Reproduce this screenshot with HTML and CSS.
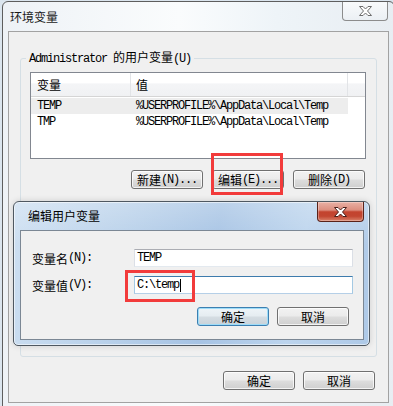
FILE: index.html
```html
<!DOCTYPE html>
<html>
<head>
<meta charset="utf-8">
<title>环境变量</title>
<link rel="stylesheet" href="styles.css">
</head>
<body>
<div class="win">
  <div class="titlebar">
    <span class="title">环境变量</span>
    <span class="close inactive"><svg width="13" height="10" viewBox="0 0 13 10"><polygon points="0.5,0.5 4,0.5 6.5,3 9,0.5 12.5,0.5 8.5,5 12.5,9.5 9,9.5 6.5,7 4,9.5 0.5,9.5 4.5,5" fill="#fff" stroke="#6d6d6d" stroke-width="1" stroke-linejoin="round"/></svg></span>
  </div>
  <div class="client">
    <fieldset class="group">
      <legend><span class="m">Administrator </span>的用户变量<span class="m">(U)</span></legend>
      <div class="list">
        <div class="lhead"><div class="c1">变量</div><div class="c2">值</div><div class="c3"></div></div>
        <div class="lrow sel m"><div class="c1">TEMP</div><div class="c2">%USERPROFILE%\AppData\Local\Temp</div></div>
        <div class="lrow m"><div class="c1">TMP</div><div class="c2">%USERPROFILE%\AppData\Local\Temp</div></div>
      </div>
      <div class="btns">
        <button class="btn">新建<span class="m">(N)...</span></button>
        <button class="btn">编辑<span class="m">(E)...</span></button>
        <button class="btn">删除<span class="m">(D)</span></button>
      </div>
    </fieldset>
    <div class="btns bottom">
      <button class="btn">确定</button>
      <button class="btn">取消</button>
    </div>
  </div>
</div>

<div class="dlg">
  <div class="dtitlebar">
    <span class="dtitle">编辑用户变量</span>
    <span class="close active"><svg width="13" height="10" viewBox="0 0 13 10"><polygon points="0.5,0.5 4,0.5 6.5,3 9,0.5 12.5,0.5 8.5,5 12.5,9.5 9,9.5 6.5,7 4,9.5 0.5,9.5 4.5,5" fill="#fff" stroke="#4a1e18" stroke-width="1" stroke-linejoin="round"/></svg></span>
  </div>
  <div class="dclient">
    <div class="form">
      <div class="lbl">变量名<span class="m">(N):</span></div>
      <div class="field m">TEMP</div>
      <div class="lbl">变量值<span class="m">(V):</span></div>
      <div class="field focus m">C:\temp<span class="caret"></span></div>
    </div>
    <div class="btns dbtns">
      <button class="btn default">确定</button>
      <button class="btn">取消</button>
    </div>
  </div>
</div>

<div class="mark mark1"></div>
<div class="mark mark2"></div>
</body>
</html>
```

FILE: styles.css
```css
* { box-sizing: border-box; }
html, body { margin: 0; padding: 0; }
body {
  width: 393px;
  height: 406px;
  overflow: hidden;
  position: relative;
  background: #dbe5ee;
  font-family: "Noto Sans CJK SC", "Liberation Sans", sans-serif;
  font-size: 12px;
  color: #000;
}
.m {
  font-family: "Liberation Mono", "Noto Sans CJK SC", monospace;
  font-size: 12px;
  letter-spacing: -1.2px;
}

/* outer window */
.win {
  margin: 1px 0 0 2px;
  width: 393px;
  border: 1px solid #5e5e5e;
  border-radius: 6px 6px 0 0;
  background: linear-gradient(90deg, #eef2f6 0%, #fafcfd 45%, #eef4f8 70%, #e8edf2 100%);
  padding: 0 5px 5px;
}
.titlebar {
  height: 29px;
  display: flex;
  align-items: flex-start;
}
.title {
  padding-left: 2px;
  line-height: 29px;
  color: #1a1a1a;
}
.close {
  margin-left: auto;
  display: flex;
  align-items: center;
  justify-content: center;
  border-radius: 0 0 4px 4px;
}
.close.inactive {
  width: 46px;
  height: 19px;
  margin-right: 1px;
  border: 1px solid #8c8c8c;
  border-top: 0;
  background: linear-gradient(rgba(255,255,255,0.7), rgba(236,240,244,0.7));
}
.client {
  border: 1px solid #a2a2a2;
  background: #f0f0f0;
  padding: 0 0 12px;
}
.group {
  margin: 18px 11px 0;
  padding: 0 0 167px;
  border: 1px solid #d5dfe5;
  border-radius: 3px;
  min-width: 0;
}
.group legend {
  margin-left: 5px;
  padding: 0 3px;
  line-height: 14px;
}
.list {
  margin: 6px 0 0 9px;
  width: 336px;
  height: 87px;
  border: 1px solid #828790;
  background: #fff;
}
.lhead {
  display: flex;
  height: 24px;
  border-bottom: 1px solid #d5d5d5;
  background: linear-gradient(#ffffff 0%, #ffffff 45%, #f4f5f7 46%, #f0f1f3 100%);
  line-height: 23px;
}
.lhead .c1 { width: 100px; padding-left: 6px; border-right: 1px solid #e2e4e7; }
.lhead .c2 { width: 217px; padding-left: 5px; border-right: 1px solid #e2e4e7; }
.lhead .c3 { flex: 1; }
.lrow {
  display: flex;
  width: 317px;
  height: 16px;
  line-height: 16px;
  white-space: nowrap;
}
.lrow.sel { margin-top: 1px; background: #ededed; }
.lrow .c1 { width: 100px; padding-left: 6px; }
.lrow .c2 { width: 217px; padding-left: 5px; }

.btns {
  display: flex;
  justify-content: flex-end;
  gap: 9px;
  margin: 11px 11px 0 0;
}
.btns.bottom {
  gap: 8px;
  margin: 14px 13px 0 0;
}
.btn {
  width: 72px;
  height: 19px;
  padding: 0;
  margin: 0;
  font: inherit;
  color: #000;
  display: flex;
  align-items: center;
  justify-content: center;
  border: 1px solid #707070;
  border-radius: 3px;
  background: linear-gradient(#f2f2f2 0%, #ebebeb 48%, #dddddd 52%, #cfcfcf 100%);
  box-shadow: inset 0 0 0 1px rgba(255,255,255,0.75);
  white-space: nowrap;
}

/* edit dialog */
.dlg {
  position: absolute;
  left: 13px;
  top: 201px;
  width: 357px;
  height: 145px;
  border: 1px solid #4f5861;
  border-radius: 6px 6px 5px 5px;
  padding: 0 5px 5px 6px;
  background:
    linear-gradient(rgba(255,255,255,0.25), rgba(255,255,255,0) 30%),
    linear-gradient(100deg, #cddff1 0%, #b9d1ea 30%, #a6c3e4 55%, #bcd4ed 78%, #aec9e7 100%);
  box-shadow: inset 0 0 0 1px rgba(255,255,255,0.55), 0 0 6px rgba(0,0,0,0.15);
}
.dtitlebar {
  height: 28px;
  display: flex;
  align-items: flex-start;
}
.dtitle {
  padding-left: 8px;
  line-height: 27px;
  color: #000;
}
.close.active {
  width: 47px;
  height: 20px;
  border: 1px solid #5a2219;
  border-top: 0;
  background: linear-gradient(#e9b0a4 0%, #dc8e7f 42%, #c3432e 52%, #c24631 75%, #d9826a 100%);
  box-shadow: inset 0 0 0 1px rgba(255,255,255,0.3);
}
.dclient {
  height: 110px;
  border: 1px solid #7b8794;
  background: #f0f0f0;
  padding: 18px 14px 13px 11px;
}
.form {
  display: grid;
  grid-template-columns: 102px 219px;
  grid-auto-rows: 18px;
  row-gap: 9px;
}
.lbl {
  display: flex;
  align-items: center;
  white-space: nowrap;
}
.field {
  display: flex;
  align-items: center;
  padding-left: 2px;
  background: #fff;
  border: 1px solid;
  border-color: #abadb3 #dbdfe6 #e3e9ef #dbdfe6;
  white-space: nowrap;
}
.field.focus {
  border-color: #3d7bad #a4c9e3 #b5cfe7 #a4c9e3;
}
.caret {
  display: inline-block;
  width: 1px;
  height: 13px;
  margin-left: 1px;
  background: #000;
}
.dbtns {
  gap: 8px;
  margin: 13px 0 0 0;
}
.btn.default {
  border-color: #3c7fb1;
  box-shadow: inset 0 0 0 1px #9ddcf8;
  background: linear-gradient(#eef4f8 0%, #e5ecf1 48%, #d5dde3 52%, #c9d2d9 100%);
}

/* red annotation boxes */
.mark {
  position: absolute;
  border: 3px solid #f23b3b;
}
.mark1 { left: 211px; top: 153px; width: 72px; height: 42px; }
.mark2 { left: 125px; top: 270px; width: 70px; height: 32px; }
```
